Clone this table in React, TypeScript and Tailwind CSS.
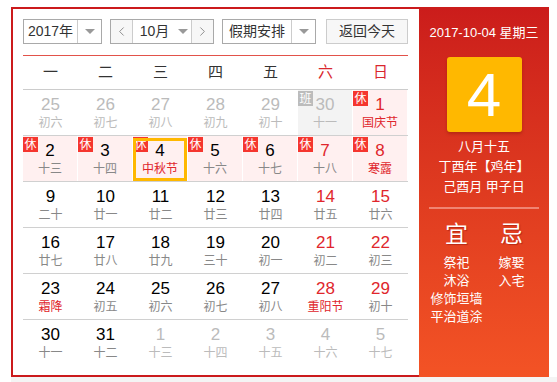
import { ChevronLeft, ChevronRight } from "lucide-react";

type Day = {
  n: number;
  lunar: string;
  other?: boolean; // not in this month
  weekend?: boolean;
  fest?: boolean; // red lunar text
  tag?: "休" | "班";
  selected?: boolean;
};

const weeks: Day[][] = [
  [
    { n: 25, lunar: "初六", other: true },
    { n: 26, lunar: "初七", other: true },
    { n: 27, lunar: "初八", other: true },
    { n: 28, lunar: "初九", other: true },
    { n: 29, lunar: "初十", other: true },
    { n: 30, lunar: "十一", other: true, tag: "班" },
    { n: 1, lunar: "国庆节", weekend: true, fest: true, tag: "休" },
  ],
  [
    { n: 2, lunar: "十三", tag: "休" },
    { n: 3, lunar: "十四", tag: "休" },
    { n: 4, lunar: "中秋节", fest: true, tag: "休", selected: true },
    { n: 5, lunar: "十六", tag: "休" },
    { n: 6, lunar: "十七", tag: "休" },
    { n: 7, lunar: "十八", weekend: true, tag: "休" },
    { n: 8, lunar: "寒露", weekend: true, fest: true, tag: "休" },
  ],
  [
    { n: 9, lunar: "二十" },
    { n: 10, lunar: "廿一" },
    { n: 11, lunar: "廿二" },
    { n: 12, lunar: "廿三" },
    { n: 13, lunar: "廿四" },
    { n: 14, lunar: "廿五", weekend: true },
    { n: 15, lunar: "廿六", weekend: true },
  ],
  [
    { n: 16, lunar: "廿七" },
    { n: 17, lunar: "廿八" },
    { n: 18, lunar: "廿九" },
    { n: 19, lunar: "三十" },
    { n: 20, lunar: "初一" },
    { n: 21, lunar: "初二", weekend: true },
    { n: 22, lunar: "初三", weekend: true },
  ],
  [
    { n: 23, lunar: "霜降", fest: true },
    { n: 24, lunar: "初五" },
    { n: 25, lunar: "初六" },
    { n: 26, lunar: "初七" },
    { n: 27, lunar: "初八" },
    { n: 28, lunar: "重阳节", weekend: true, fest: true },
    { n: 29, lunar: "初十", weekend: true },
  ],
  [
    { n: 30, lunar: "十一" },
    { n: 31, lunar: "十二" },
    { n: 1, lunar: "十三", other: true },
    { n: 2, lunar: "十四", other: true },
    { n: 3, lunar: "十五", other: true },
    { n: 4, lunar: "十六", other: true },
    { n: 5, lunar: "十七", other: true },
  ],
];

const weekdays = ["一", "二", "三", "四", "五", "六", "日"];

function Caret() {
  return (
    <span className="block h-0 w-0 border-x-[5px] border-t-[5px] border-x-transparent border-t-[#999]" />
  );
}

function DayCell({ d }: { d: Day }) {
  const bg =
    d.tag === "休" ? "bg-[#fff0f0] border-r border-white" : d.tag === "班" ? "bg-[#f3f3f3] border-r border-white" : "";
  const numColor = d.other ? "text-[#bbb]" : d.weekend ? "text-[#e0262c]" : "text-black";
  const lunarColor = d.other ? "text-[#bbb]" : d.fest ? "text-[#e0262c]" : "text-[#888]";
  return (
    <div className={`relative flex h-[45px] flex-col items-center pt-[5px] ${bg}`}>
      {d.tag && (
        <span
          className={`absolute left-0 top-[1px] flex h-[15px] w-[15px] items-center justify-center text-[12px] leading-none text-white ${
            d.tag === "休" ? "bg-[#f5362f]" : "bg-[#bcbcbc]"
          }`}
        >
          {d.tag}
        </span>
      )}
      {d.selected && (
        <span className="pointer-events-none absolute inset-x-0 bottom-0 top-[2px] border-[3px] border-[#ffb800]" />
      )}
      <span className={`text-[17px] leading-[20px] ${numColor}`}>{d.n}</span>
      <span className={`text-[12px] leading-[16px] ${lunarColor}`}>{d.lunar}</span>
    </div>
  );
}

export default function App() {
  return (
    <div className="min-h-[382px] bg-white font-['Liberation_Sans','Noto_Sans_CJK_SC',sans-serif]">
      <div className="pl-[11px] pt-[7px]">
        <div className="flex h-[370px] w-[538px]">
          {/* left calendar */}
          <div className="w-[408px] border-y-2 border-l-2 border-[#cb1a1c] pl-[10px] pr-[11px] pt-[10px]">
            <div className="flex items-center border-b border-[#e2524a] pb-[11px] text-[14px] text-[#333]">
              <div className="flex h-[25px] w-[79px] border border-[#a9a9a9]">
                <span className="flex w-[54px] items-center justify-center border-r border-[#ccc]">2017年</span>
                <span className="flex flex-1 items-center justify-center"><Caret /></span>
              </div>
              <div className="ml-[8px] flex h-[25px] w-[104px] border border-[#a9a9a9]">
                <span className="flex w-[21px] items-center justify-center bg-[#f7f7f7] text-[#777]">
                  <ChevronLeft size={15} strokeWidth={1.3} />
                </span>
                <span className="flex w-[60px] items-center justify-center gap-[9px] border-x border-[#ccc] pl-[4px]">
                  10月 <Caret />
                </span>
                <span className="flex flex-1 items-center justify-center bg-[#f7f7f7] text-[#777]">
                  <ChevronRight size={15} strokeWidth={1.3} />
                </span>
              </div>
              <div className="ml-[8px] flex h-[25px] w-[94px] border border-[#a9a9a9]">
                <span className="flex w-[69px] items-center justify-center border-r border-[#ccc]">假期安排</span>
                <span className="flex flex-1 items-center justify-center"><Caret /></span>
              </div>
              <div className="ml-[10px] flex h-[25px] w-[82px] items-center justify-center border border-[#ccc] bg-[#f7f7f7]">
                返回今天
              </div>
            </div>

            <div className="grid h-[34px] grid-cols-7 items-center border-b border-[#ccc] text-[15px]">
              {weekdays.map((w, i) => (
                <span key={w} className={`text-center ${i >= 5 ? "text-[#d9272e]" : "text-[#333]"}`}>
                  {w}
                </span>
              ))}
            </div>

            {weeks.map((wk, i) => (
              <div
                key={i}
                className={`grid grid-cols-7 ${i < weeks.length - 1 ? "border-b border-[#d0d0d0]" : ""}`}
              >
                {wk.map((d, j) => (
                  <DayCell key={j} d={d} />
                ))}
              </div>
            ))}
          </div>

          {/* right panel */}
          <div className="flex w-[130px] flex-col items-center bg-gradient-to-b from-[#cb1c1b] to-[#f35325] pt-[16px] text-white">
            <p className="text-[13px] leading-[20px]">2017-10-04 星期三</p>
            <div className="mt-[14px] flex h-[75px] w-[75px] items-center justify-center rounded-[3px] bg-[#ffb800] shadow-[0_2px_3px_rgba(120,20,0,0.35)]">
              <span className="text-[62px] leading-none">4</span>
            </div>
            <div className="mt-[5px] text-center text-[13px] leading-[20px]">
              <p>八月十五</p>
              <p>丁酉年【鸡年】</p>
              <p>己酉月 甲子日</p>
            </div>
            <div className="mt-[10px] h-[2px] w-[110px] bg-[#f08472]" />
            <div className="mt-[10px] grid w-[110px] grid-cols-2 text-center">
              <div className="flex flex-col items-center">
                <span className="text-[23px] leading-[30px] [text-shadow:1px_1px_1px_rgba(120,0,0,0.4)]">宜</span>
                <div className="mt-[5px] text-[13px] leading-[18px]">
                  <p>祭祀</p>
                  <p>沐浴</p>
                  <p>修饰垣墙</p>
                  <p>平治道涂</p>
                </div>
              </div>
              <div className="flex flex-col items-center">
                <span className="text-[23px] leading-[30px] [text-shadow:1px_1px_1px_rgba(120,0,0,0.4)]">忌</span>
                <div className="mt-[5px] text-[13px] leading-[18px]">
                  <p>嫁娶</p>
                  <p>入宅</p>
                </div>
              </div>
            </div>
          </div>
        </div>
      </div>
      <div className="ml-[11px] h-[5px] bg-[#f4f4f4]" />
    </div>
  );
}
